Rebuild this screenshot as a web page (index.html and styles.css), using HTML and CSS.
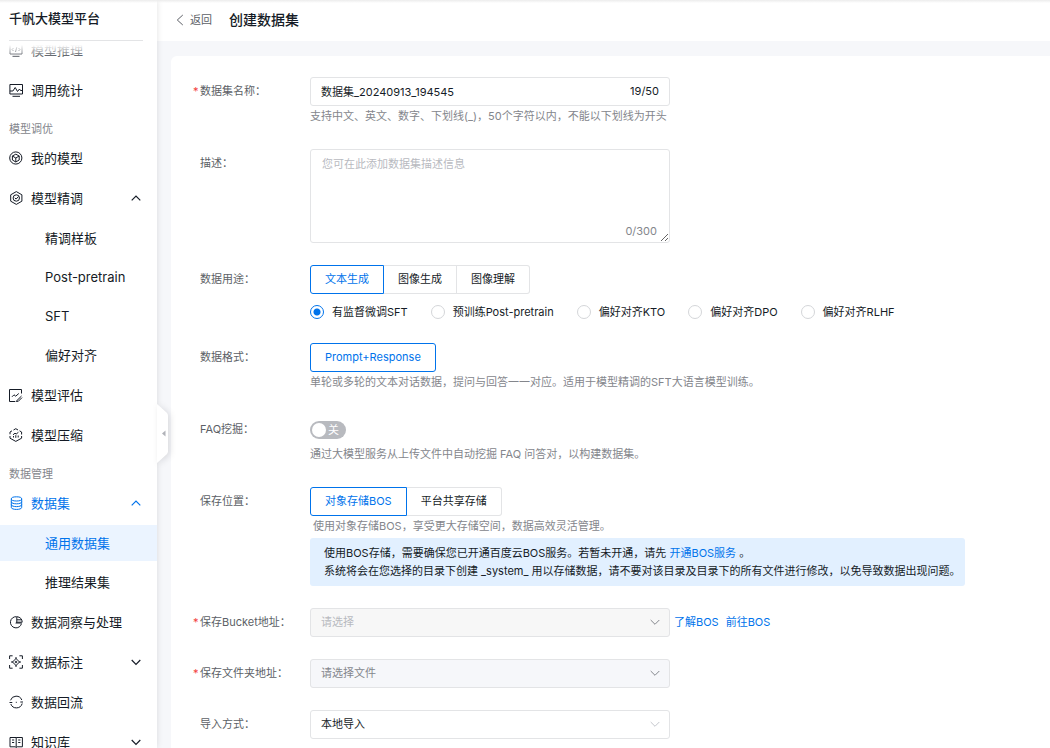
FILE: index.html
```html
<!DOCTYPE html>
<html lang="zh-CN">
<head>
<meta charset="utf-8">
<title>创建数据集 - 千帆大模型平台</title>
<link rel="stylesheet" href="styles.css">
</head>
<body>
<div class="app">
  <aside class="sidebar">
    <h2 class="brand">千帆大模型平台</h2>
    <nav class="menu">
      <ul class="menu-list">
        <li><a class="item" href="#"><svg class="icon" viewBox="0 0 14 14"><path d="M1 1.500h12v9.500H1zM3.500 13.300h7M4.500 5L3 6.500 4.500 8M9.500 5L11 6.500 9.500 8M7.800 4L6.500 9"/></svg>模型推理</a></li>
        <li><a class="item" href="#"><svg class="icon" viewBox="0 0 14 14"><path d="M.9 1.500h12.600v9.500H.9zM3.500 13.300h7.500M.9 8h3L6.200 4.500l2.300 4 2-2.500 1 1.500h2"/></svg>调用统计</a></li>
      </ul>
      <h3 class="menu-heading">模型调优</h3>
      <ul class="menu-list">
        <li><a class="item" href="#"><svg class="icon" viewBox="0 0 14 14"><circle cx="6.800" cy="7" r="6.100"/><path d="M6.800 3.200L10.200 5v4l-3.400 2L3.400 9V5zM3.400 5l3.400 2 3.400-2M6.800 7v4"/></svg>我的模型</a></li>
        <li>
          <a class="item" href="#"><svg class="icon" viewBox="0 0 14 14"><path d="M7.300 .6l5.600 3.200v6.400l-5.600 3.200-5.600-3.200V3.800z"/><circle cx="7.300" cy="7" r="3.200"/><path d="M5.800 6.800l1.300 1.300 2.400-2.600"/></svg>模型精调<svg class="arrow" viewBox="0 0 10 10"><path d="M.7 7.300L5 3l4.300 4.300"/></svg></a>
          <ul class="submenu">
            <li><a class="item sub" href="#">精调样板</a></li>
            <li><a class="item sub" href="#">Post-pretrain</a></li>
            <li><a class="item sub" href="#">SFT</a></li>
            <li><a class="item sub" href="#">偏好对齐</a></li>
          </ul>
        </li>
        <li><a class="item" href="#"><svg class="icon" viewBox="0 0 14 14"><path d="M12.500 5.500v-4H.5v12h5.800M3 8.800l2-2 1.700 1.400L9.800 5.500M7.200 13.300l5.300-5.300M9.300 13.300l3.700-3.700M7.200 13.300h2.100"/></svg>模型评估</a></li>
        <li><a class="item" href="#"><svg class="icon" viewBox="0 0 14 14"><path d="M4.500 2L6.800.7 9 2M10.500 2.800l2.100 1.200v2.500M12.600 8v2.200L6.800 13.400 1 10.200V8M1 6.300V4l2-1.200M4.500 9.500V8M6.800 9.800V7.200M9.200 9.500V7.500M4 6.800L6 5.200l1.200.8L9.400 4.300"/></svg>模型压缩</a></li>
      </ul>
      <h3 class="menu-heading">数据管理</h3>
      <ul class="menu-list">
        <li>
          <a class="item open" href="#"><svg class="icon" viewBox="0 0 14 14"><ellipse cx="7.500" cy="2.900" rx="5.200" ry="2.100"/><path d="M2.300 2.900v8.500c0 2.700 10.400 2.700 10.400 0V2.900M2.300 5.800c0 2.700 10.400 2.700 10.400 0M2.300 8.600c0 2.700 10.400 2.700 10.400 0"/></svg>数据集<svg class="arrow" viewBox="0 0 10 10"><path d="M.7 7.300L5 3l4.300 4.300"/></svg></a>
          <ul class="submenu">
            <li><a class="item sub active" href="#" aria-current="page">通用数据集</a></li>
            <li><a class="item sub" href="#">推理结果集</a></li>
          </ul>
        </li>
        <li><a class="item" href="#"><svg class="icon" viewBox="0 0 14 14"><path d="M7.500 1.700A5.600 5.600 0 1 0 12.500 8.500M7.800 1.700v5.500h5.400c0-3-2-5.300-5.400-5.500zM7.800 4.800h4.600M7.800 7.200l-1 .8h5.500"/></svg>数据洞察与处理</a></li>
        <li><a class="item" href="#"><svg class="icon" viewBox="0 0 14 14"><path d="M.6 4V.8h3M10.400.8h3V4M13.400 10v3.200h-3M3.600 13.200h-3V10M7 3.500L10.500 7 7 10.500 3.500 7zM7 2v2M7 10v2M2 7h2M10 7h2"/><circle cx="7" cy="7" r=".8"/></svg>数据标注<svg class="arrow" viewBox="0 0 10 10"><path d="M.7 3L5 7.300 9.300 3"/></svg></a></li>
        <li><a class="item" href="#"><svg class="icon" viewBox="0 0 14 14"><path d="M1.500 5.300A6 6 0 0 1 12.800 5M13.200 8.500A6 6 0 0 1 1.800 9M.5 7.500h2.800M11.300 7h2.700M6.800 7.300h1"/></svg>数据回流</a></li>
        <li><a class="item" href="#"><svg class="icon" viewBox="0 0 14 14"><path d="M7.200 2.500H1v9.300h5.200l1 .9 1-.9h5.200V2.500zM7.200 2.500v9.500M3 5h2.200M3 7.500h2.200M9.200 5h2.200M9.200 7.500h2.200"/></svg>知识库<svg class="arrow" viewBox="0 0 10 10"><path d="M.7 3L5 7.300 9.300 3"/></svg></a></li>
      </ul>
    </nav>
    <button class="collapse" type="button" aria-label="收起菜单"><svg viewBox="0 0 12 60"><path class="tab" d="M0 0l9.500 8.500q1.500 1.400 1.500 3v36q0 1.600-1.500 3L0 59z"/><path class="tri" d="M8.500 26.500v6L5 29.500z"/></svg></button>
  </aside>

  <main class="main">
    <header class="topbar">
      <a class="back" href="#"><svg viewBox="0 0 8 12"><path d="M6.800 1L1.300 6l5.500 5"/></svg>返回</a>
      <h1 class="title">创建数据集</h1>
    </header>
    <form class="card">
      <div class="row">
        <label class="label required" for="name">数据集名称：</label>
        <div class="field">
          <div class="box"><input class="control" id="name" type="text" value="数据集_20240913_194545"><span class="count">19/50</span></div>
          <p class="help">支持中文、英文、数字、下划线(_)，50个字符以内，不能以下划线为开头</p>
        </div>
      </div>
      <div class="row">
        <label class="label" for="desc">描述：</label>
        <div class="field">
          <div class="box"><textarea class="control area" id="desc" placeholder="您可在此添加数据集描述信息"></textarea><span class="count area-count">0/300</span></div>
        </div>
      </div>
      <div class="row">
        <span class="label">数据用途：</span>
        <div class="field">
          <div class="segments"><button type="button" class="seg on">文本生成</button><button type="button" class="seg">图像生成</button><button type="button" class="seg">图像理解</button></div>
          <div class="radios">
            <label class="radio"><input type="radio" name="kind" checked>有监督微调SFT</label>
            <label class="radio"><input type="radio" name="kind">预训练Post-pretrain</label>
            <label class="radio"><input type="radio" name="kind">偏好对齐KTO</label>
            <label class="radio"><input type="radio" name="kind">偏好对齐DPO</label>
            <label class="radio"><input type="radio" name="kind">偏好对齐RLHF</label>
          </div>
        </div>
      </div>
      <div class="row">
        <span class="label">数据格式：</span>
        <div class="field">
          <div class="segments"><button type="button" class="seg on">Prompt+Response</button></div>
          <p class="help">单轮或多轮的文本对话数据，提问与回答一一对应。适用于模型精调的SFT大语言模型训练。</p>
        </div>
      </div>
      <div class="row">
        <label class="label" for="faq">FAQ挖掘：</label>
        <div class="field">
          <div class="switch-line"><label class="switch"><input id="faq" type="checkbox" role="switch"><span>关</span></label></div>
          <p class="help">通过大模型服务从上传文件中自动挖掘 FAQ 问答对，以构建数据集。</p>
        </div>
      </div>
      <div class="row">
        <span class="label">保存位置：</span>
        <div class="field">
          <div class="segments"><button type="button" class="seg on">对象存储BOS</button><button type="button" class="seg">平台共享存储</button></div>
          <p class="help indent">使用对象存储BOS，享受更大存储空间，数据高效灵活管理。</p>
          <div class="notice">
            <p>使用BOS存储，需要确保您已开通百度云BOS服务。若暂未开通，请先 <a href="#">开通BOS服务</a> 。</p>
            <p>系统将会在您选择的目录下创建 _system_ 用以存储数据，请不要对该目录及目录下的所有文件进行修改，以免导致数据出现问题。</p>
          </div>
        </div>
      </div>
      <div class="row">
        <label class="label required" for="bucket">保存Bucket地址：</label>
        <div class="field inline">
          <div class="box"><select class="control disabled" id="bucket" disabled><option>请选择</option></select><svg class="caret" viewBox="0 0 10 10"><path d="M.7 3L5 7.300 9.300 3"/></svg></div>
          <div class="links"><a href="#">了解BOS</a><a href="#">前往BOS</a></div>
        </div>
      </div>
      <div class="row">
        <label class="label required" for="folder">保存文件夹地址：</label>
        <div class="field">
          <div class="box"><select class="control folder" id="folder"><option>请选择文件</option></select><svg class="caret" viewBox="0 0 10 10"><path d="M.7 3L5 7.300 9.300 3"/></svg></div>
        </div>
      </div>
      <div class="row">
        <label class="label" for="mode">导入方式：</label>
        <div class="field">
          <div class="box"><select class="control" id="mode"><option>本地导入</option></select><svg class="caret light" viewBox="0 0 10 10"><path d="M.7 3L5 7.300 9.300 3"/></svg></div>
        </div>
      </div>
    </form>
  </main>
</div>
</body>
</html>
```

FILE: styles.css
```css
* { box-sizing: border-box; }
body {
  margin: 0;
  font: 11px/18px Inter, "Noto Sans CJK SC", sans-serif;
  color: #151b26;
  background: #f6f7fa;
  overflow: hidden;
}
h1, h2, h3, p, ul { margin: 0; padding: 0; }
ul { list-style: none; }
a { color: #0073eb; text-decoration: none; }
button, input, select, textarea { font: inherit; color: inherit; margin: 0; }
svg { fill: none; stroke: currentColor; flex: none; }

.app { display: flex; height: 100vh; }
.app::before {
  content: "";
  position: absolute;
  inset: 0 0 auto;
  height: 3px;
  z-index: 5;
  background: linear-gradient(#ececec, rgba(255, 255, 255, 0));
}

/* Sidebar */
.sidebar {
  position: relative;
  z-index: 2;
  display: flex;
  flex-direction: column;
  flex: none;
  width: 157px;
  background: #fff;
  box-shadow: 0 0 6px rgba(7, 12, 20, .12);
}
.brand {
  margin: 0 14px 0 9px;
  height: 41px;
  border-bottom: 1px solid #e3e4e6;
  font-size: 13px;
  line-height: 36px;
  font-weight: 500;
}
.menu { position: relative; flex: 1; min-height: 0; overflow: hidden; }
.menu::before {
  content: "";
  position: absolute;
  inset: 0 0 auto;
  height: 20px;
  background: linear-gradient(#fff 20%, rgba(255, 255, 255, 0));
}
.menu-list { display: flex; flex-direction: column; gap: 4px; }
.menu-list:first-child { margin-top: -9px; }
.menu-heading {
  margin: 12px 9px 2px;
  font-size: 11px;
  line-height: 18px;
  font-weight: 400;
  color: #84868c;
}
.item {
  display: flex;
  align-items: center;
  gap: 8px;
  height: 36px;
  padding: 0 16px 0 9px;
  font-size: 13px;
  color: #151b26;
}
.item.open { color: #0073eb; }
.icon { width: 14px; height: 14px; }
.arrow { width: 10px; height: 10px; margin-left: auto; stroke-width: 1.2; }
.submenu { display: flex; flex-direction: column; gap: 3px; margin-top: 4px; }
.item.sub { padding-left: 45px; }
.item.active { color: #0073eb; background: #ebf4ff; }
.collapse {
  position: absolute;
  top: calc(50% + 30px);
  left: 100%;
  padding: 0;
  border: 0;
  background: none;
}
.collapse svg { display: block; width: 12px; height: 60px; filter: drop-shadow(2px 1px 3px rgba(7, 12, 20, .12)); }
.collapse .tab { fill: #fff; stroke: none; }
.collapse .tri { fill: #b0b2b8; stroke: none; }

/* Main column */
.main { display: flex; flex-direction: column; flex: 1; min-width: 0; }
.topbar { display: flex; align-items: center; gap: 17px; height: 41px; flex: none; padding: 0 0 2px 19px; background: #fff; }
.back { display: flex; align-items: center; gap: 6px; color: #5c5f66; }
.back svg { width: 8px; height: 12px; }
.title { font-size: 14px; line-height: 20px; font-weight: 500; }
.card {
  display: flex;
  flex-direction: column;
  flex: 1;
  gap: 22px;
  margin: 15px 0 0 14px;
  padding: 21px 0 20px 22px;
  border-radius: 6px 0 0 0;
  background: #fff;
}
.row { display: flex; }
.label { flex: none; width: 117px; padding-left: 7px; line-height: 29px; color: #5c5f66; }
.required { padding-left: 0; }
.required::before { content: "*"; display: inline-block; width: 7px; color: #f33e3e; }
.field { flex: 1; min-width: 0; }
.inline { display: flex; align-items: center; gap: 4px; }
.links { display: flex; gap: 7px; padding-bottom: 1px; }

.box { position: relative; width: 360px; height: fit-content; }
.control {
  display: block;
  width: 100%;
  height: 29px;
  padding: 0 10px 2px;
  border: 1px solid #e3e4e6;
  border-radius: 3px;
  background: #fff;
  appearance: none;
  outline: 0;
  opacity: 1;
}
.area { height: 94px; padding: 5px 11px; resize: vertical; }
.area::placeholder { color: #b8babf; }
.disabled { color: #b8babf; background: #f7f7f7; }
.folder { color: #84868c; background: #f6f7fa; }
.count { position: absolute; right: 11px; top: 5px; }
.area-count { top: auto; right: 13px; bottom: 3px; color: #84868c; }
.caret { position: absolute; right: 10px; top: 9px; width: 10px; height: 10px; color: #84868c; pointer-events: none; }
.light { color: #c4c6cc; }

.help { margin-bottom: 1px; line-height: 20px; color: #84868c; }
.indent { padding-left: 3px; }

.segments { display: flex; }
.seg {
  height: 29px;
  padding: 0 14px 2px;
  border: 1px solid #e3e4e6;
  border-left-width: 0;
  background: #fff;
}
.seg:first-child { border-left-width: 1px; border-radius: 3px 0 0 3px; }
.seg:last-child { border-radius: 0 3px 3px 0; }
.seg:only-child { border-radius: 3px; }
.seg.on { border-color: #0073eb; color: #0073eb; }

.radios { display: flex; gap: 23px; padding-top: 9px; }
.radio { display: flex; align-items: center; gap: 8px; }
.radio input {
  width: 14px;
  height: 14px;
  border: 1px solid #d4d6d9;
  border-radius: 50%;
  background: #fff;
  appearance: none;
}
.radio input:checked { border-color: #0073eb; background: radial-gradient(circle, #0073eb 3px, #fff 4px); }

.switch-line { display: flex; align-items: center; height: 29px; }
.switch { position: relative; display: flex; color: #fff; }
.switch input { width: 36px; height: 18px; border-radius: 9px; background: #b8babf; appearance: none; }
.switch input::before {
  content: "";
  display: block;
  width: 14px;
  height: 14px;
  margin: 2px;
  border-radius: 50%;
  background: #fff;
}
.switch span { position: absolute; right: 7px; top: 0; }

.notice {
  width: fit-content;
  margin-top: 2px;
  padding: 6px 4px 6px 14px;
  border-radius: 3px;
  background: #e2f0ff;
}
```
